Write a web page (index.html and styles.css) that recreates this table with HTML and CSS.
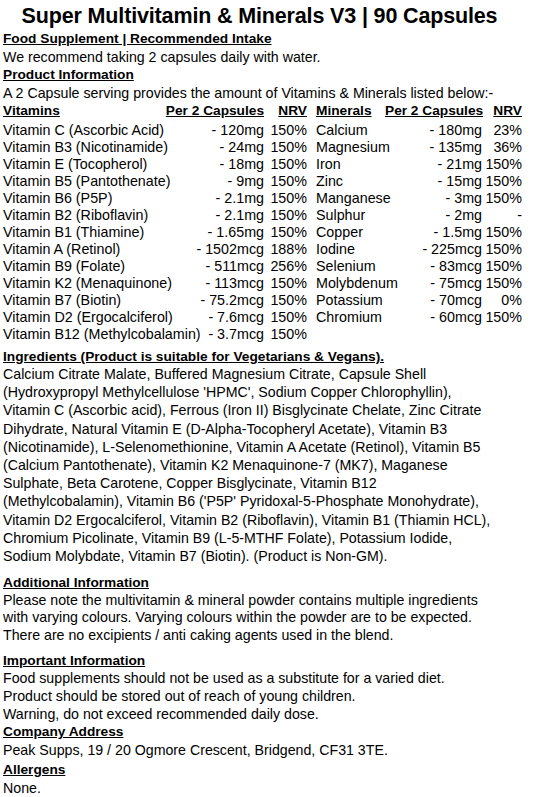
FILE: index.html
```html
<!DOCTYPE html>
<html>
<head>
  <title>Super Multivitamin &amp; Minerals V3</title>
  <link rel="stylesheet" href="styles.css">
</head>
<body>
  <div class="label">
    <h1>Super Multivitamin &amp; Minerals V3 | 90 Capsules</h1>

    <h2>Food Supplement | Recommended Intake</h2>
    <p>We recommend taking 2 capsules daily with water.</p>

    <h2>Product Information</h2>
    <p>A 2 Capsule serving provides the amount of Vitamins &amp; Minerals listed below:-</p>

    <div class="nutrients">
      <div class="th">Vitamins</div>
      <div class="th num">Per 2 Capsules</div>
      <div class="th num">NRV</div>
      <div class="th mineral">Minerals</div>
      <div class="th num">Per 2 Capsules</div>
      <div class="th num">NRV</div>

      <div>Vitamin C (Ascorbic Acid)</div><div class="num">- 120mg</div><div class="num">150%</div>
      <div class="mineral">Calcium</div><div class="num">- 180mg</div><div class="num">23%</div>

      <div>Vitamin B3 (Nicotinamide)</div><div class="num">- 24mg</div><div class="num">150%</div>
      <div class="mineral">Magnesium</div><div class="num">- 135mg</div><div class="num">36%</div>

      <div>Vitamin E (Tocopherol)</div><div class="num">- 18mg</div><div class="num">150%</div>
      <div class="mineral">Iron</div><div class="num">- 21mg</div><div class="num">150%</div>

      <div>Vitamin B5 (Pantothenate)</div><div class="num">- 9mg</div><div class="num">150%</div>
      <div class="mineral">Zinc</div><div class="num">- 15mg</div><div class="num">150%</div>

      <div>Vitamin B6 (P5P)</div><div class="num">- 2.1mg</div><div class="num">150%</div>
      <div class="mineral">Manganese</div><div class="num">- 3mg</div><div class="num">150%</div>

      <div>Vitamin B2 (Riboflavin)</div><div class="num">- 2.1mg</div><div class="num">150%</div>
      <div class="mineral">Sulphur</div><div class="num">- 2mg</div><div class="num">-</div>

      <div>Vitamin B1 (Thiamine)</div><div class="num">- 1.65mg</div><div class="num">150%</div>
      <div class="mineral">Copper</div><div class="num">- 1.5mg</div><div class="num">150%</div>

      <div>Vitamin A (Retinol)</div><div class="num">- 1502mcg</div><div class="num">188%</div>
      <div class="mineral">Iodine</div><div class="num">- 225mcg</div><div class="num">150%</div>

      <div>Vitamin B9 (Folate)</div><div class="num">- 511mcg</div><div class="num">256%</div>
      <div class="mineral">Selenium</div><div class="num">- 83mcg</div><div class="num">150%</div>

      <div>Vitamin K2 (Menaquinone)</div><div class="num">- 113mcg</div><div class="num">150%</div>
      <div class="mineral">Molybdenum</div><div class="num">- 75mcg</div><div class="num">150%</div>

      <div>Vitamin B7 (Biotin)</div><div class="num">- 75.2mcg</div><div class="num">150%</div>
      <div class="mineral">Potassium</div><div class="num">- 70mcg</div><div class="num">0%</div>

      <div>Vitamin D2 (Ergocalciferol)</div><div class="num">- 7.6mcg</div><div class="num">150%</div>
      <div class="mineral">Chromium</div><div class="num">- 60mcg</div><div class="num">150%</div>

      <div>Vitamin B12 (Methylcobalamin)</div><div class="num">- 3.7mcg</div><div class="num">150%</div>
      <div></div><div></div><div></div>
    </div>

    <h2>Ingredients (Product is suitable for Vegetarians &amp; Vegans).</h2>
    <p class="ingredients">Calcium Citrate Malate, Buffered Magnesium Citrate, Capsule Shell<br>
      (Hydroxypropyl Methylcellulose 'HPMC', Sodium Copper Chlorophyllin),<br>
      Vitamin C (Ascorbic acid), Ferrous (Iron II) Bisglycinate Chelate, Zinc Citrate<br>
      Dihydrate, Natural Vitamin E (D-Alpha-Tocopheryl Acetate), Vitamin B3<br>
      (Nicotinamide), L-Selenomethionine, Vitamin A Acetate (Retinol), Vitamin B5<br>
      (Calcium Pantothenate), Vitamin K2 Menaquinone-7 (MK7), Maganese<br>
      Sulphate, Beta Carotene, Copper Bisglycinate, Vitamin B12<br>
      (Methylcobalamin), Vitamin B6 ('P5P' Pyridoxal-5-Phosphate Monohydrate),<br>
      Vitamin D2 Ergocalciferol, Vitamin B2 (Riboflavin), Vitamin B1 (Thiamin HCL),<br>
      Chromium Picolinate, Vitamin B9 (L-5-MTHF Folate), Potassium Iodide,<br>
      Sodium Molybdate, Vitamin B7 (Biotin). (Product is Non-GM).</p>

    <h2 class="after-ingredients">Additional Information</h2>
    <p class="additional">Please note the multivitamin &amp; mineral powder contains multiple ingredients<br>
      with varying colours. Varying colours within the powder are to be expected.<br>
      There are no excipients / anti caking agents used in the blend.</p>

    <h2 class="after-additional">Important Information</h2>
    <p class="important">Food supplements should not be used as a substitute for a varied diet.</p>
    <p class="important">Product should be stored out of reach of young children.</p>
    <p class="important">Warning, do not exceed recommended daily dose.</p>

    <h2>Company Address</h2>
    <p class="address">Peak Supps, 19 / 20 Ogmore Crescent, Bridgend, CF31 3TE.</p>

    <h2>Allergens</h2>
    <p>None.</p>
  </div>
</body>
</html>
```

FILE: styles.css
```css
body {
  margin: 0;
  background-color: #fff;
  color: #000;
  font-family: "Liberation Sans", Arial, sans-serif;
  font-size: 14.2px;
}

.label {
  padding: 4px 3px 0 3px;
}

h1 {
  margin: 0 0 2px 0;
  padding-right: 16px;
  text-align: center;
  font-size: 21.5px;
  letter-spacing: -0.15px;
  line-height: 24px;
}

h2 {
  margin: 0;
  font-size: 13.7px;
  line-height: 17.5px;
  text-decoration: underline;
}

p {
  margin: 0;
  line-height: 18.5px;
}

.ingredients {
  line-height: 18.2px;
}

.after-ingredients {
  margin-top: 9px;
}

.additional {
  line-height: 17.5px;
}

.after-additional {
  margin-top: 7.5px;
}

.important {
  line-height: 18px;
}

.address {
  margin-bottom: 2px;
}

.nutrients {
  display: grid;
  grid-template-columns: 158px 103px 43px 78px 97px 40px;
  grid-template-rows: 19.5px;
  grid-auto-rows: 17px;
  line-height: 17px;
  font-size: 14.3px;
  white-space: nowrap;
  margin-bottom: 5px;
}

.nutrients .th {
  font-weight: bold;
  font-size: 13.7px;
  text-decoration: underline;
}

.nutrients .num {
  text-align: right;
}

.nutrients .mineral {
  padding-left: 9px;
}
```
